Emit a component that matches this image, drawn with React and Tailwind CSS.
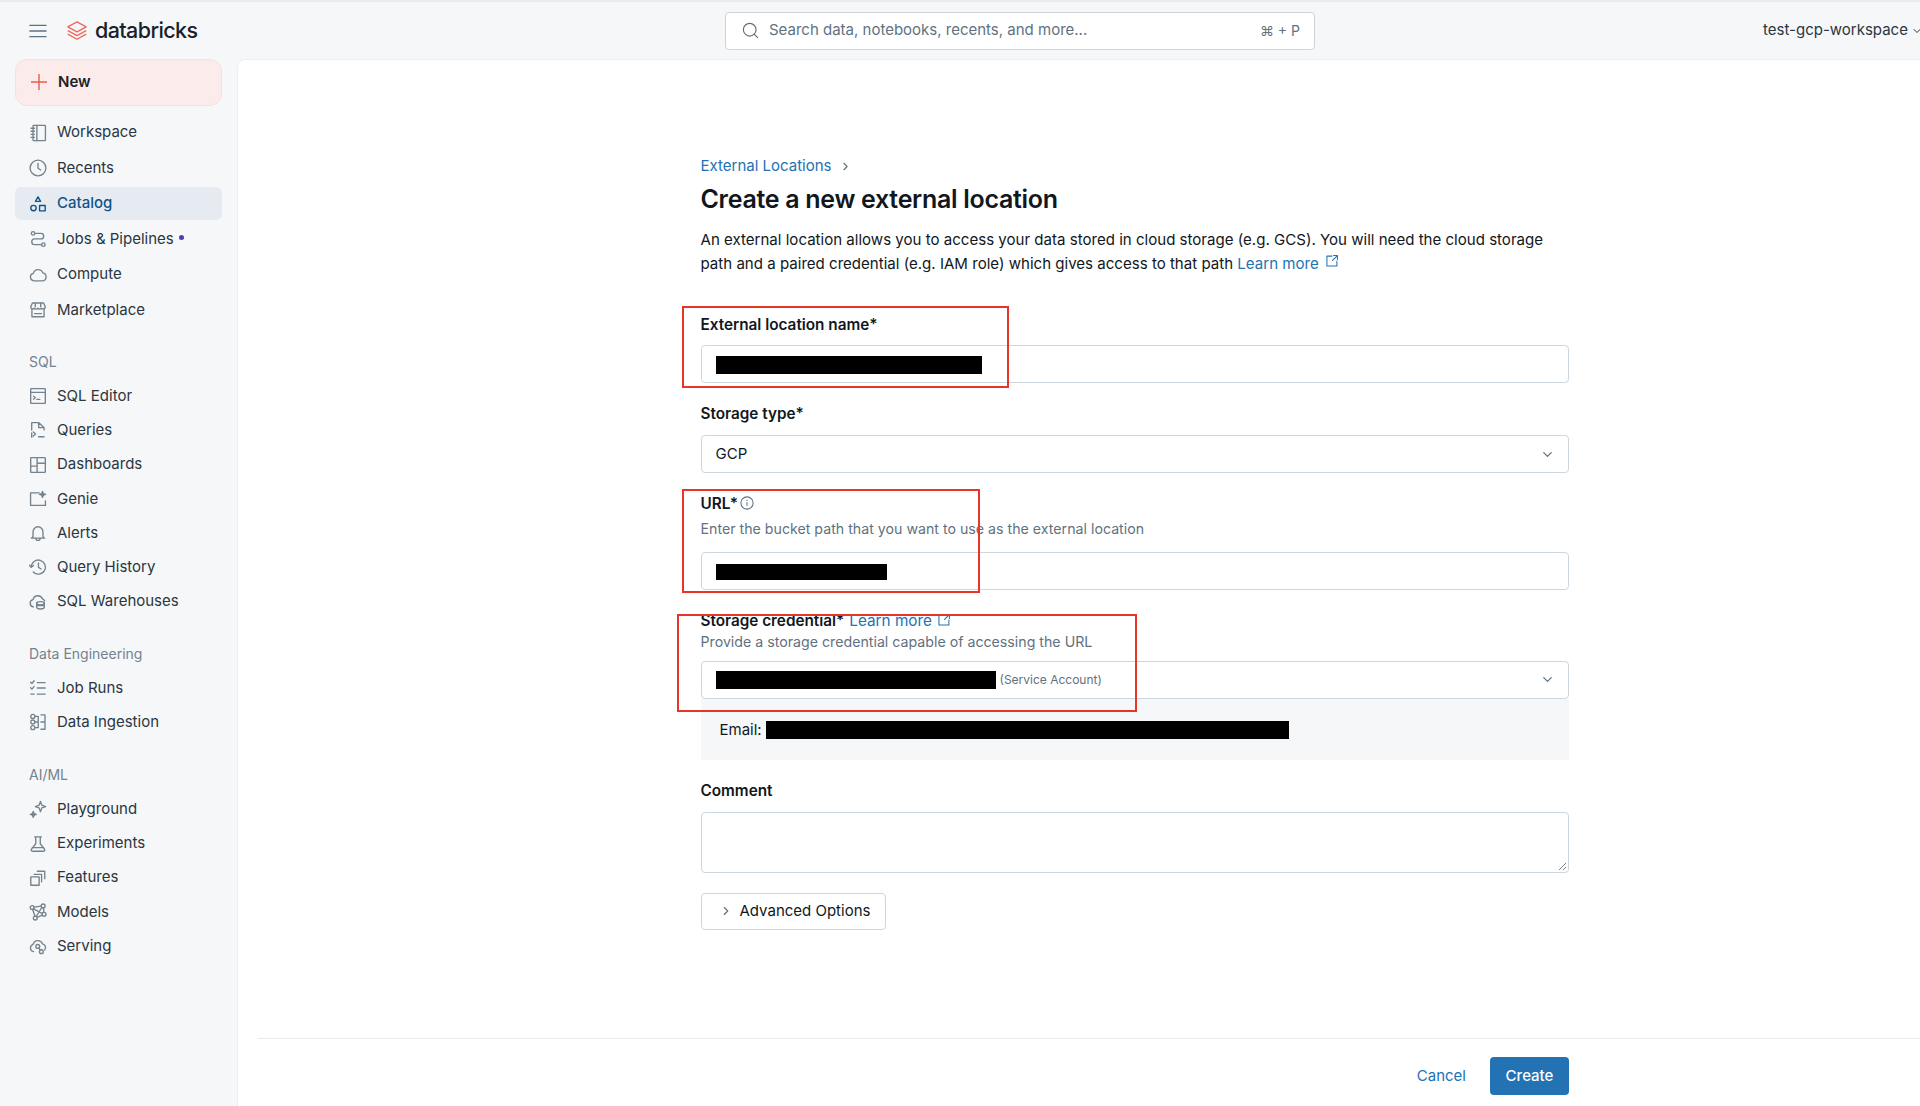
import React from 'react';
import { ChevronDown, ChevronRight, Search } from 'lucide-react';

// icon helper, everything is drawn on a 16 grid
const Ico = ({ children, className = 'w-[18px] h-[18px]' }) => (
  <svg viewBox="0 0 16 16" fill="none" stroke="currentColor" strokeWidth="1.2" strokeLinecap="round" strokeLinejoin="round" className={className} aria-hidden="true">
    {children}
  </svg>
);

const icons = {
  workspace: <><rect x="3.6" y="1.2" width="11" height="13.6" rx="0.6" /><path d="M7 1.2v13.6M1.8 3.8h3M1.8 6.4h3M1.8 9.2h3M1.8 11.9h3" /></>,
  recents: <><circle cx="8" cy="8" r="7" /><path d="M8 4v4.2l2.4 1.6" /></>,
  catalog: <><path d="M8 1.6l2.3 4H5.7z" /><circle cx="4" cy="11.6" r="2.4" /><rect x="9.4" y="9.3" width="5" height="4.8" /></>,
  jobs: <><circle cx="3.6" cy="3" r="1.5" /><circle cx="12.8" cy="13" r="1.5" /><path d="M5.2 3h5.4a2.4 2.4 0 0 1 0 4.9H5a2.5 2.5 0 0 0 0 5.1h6.2" /></>,
  compute: <path d="M4.4 13.2a3.4 3.4 0 0 1-.5-6.7 4.4 4.4 0 0 1 8.4-.4 3.6 3.6 0 0 1-.2 7.1z" />,
  marketplace: <><path d="M3 1.8h10l1.5 3.6a1.9 1.9 0 0 1-3.3 1 1.9 1.9 0 0 1-3.2 0 1.9 1.9 0 0 1-3.2 0 1.9 1.9 0 0 1-3.3-1z" /><path d="M2.6 7v7h10.8V7M5.6 2v3M10.4 2v3M5 11.2h6" /></>,
  sqlEditor: <><rect x="1.5" y="1.5" width="13" height="13" rx="0.5" /><path d="M1.5 4.8h13M4 8.2l1.6 1.3L4 10.8M7 11h2.6" /></>,
  queries: <><path d="M2.4 8V1.5h6.4l4.6 4.4v2M8.6 1.5v4.4h4.8M2.4 10.6v3.8" /><path d="M3.8 9.8l2 1.8-2 1.8M8.6 14h4.8" /></>,
  dashboards: <><rect x="1.5" y="1.5" width="13" height="13" rx="0.5" /><path d="M7.2 1.5v13M1.5 9h5.7M7.2 6.4h7.3" /></>,
  genie: <><path d="M9 2.6H1.4v11h13.2V9.6M14.8 13.6h-13" /><path d="M12 1.2l.7 2 2 .7-2 .7-.7 2-.7-2-2-.7 2-.7z" fill="currentColor" /></>,
  alerts: <><path d="M3.6 11.4V6.8a4.4 4.4 0 0 1 8.8 0v4.6l1.5 1.2H2.1z" /><path d="M6.2 12.8a1.8 1.8 0 0 0 3.6 0" /></>,
  history: <><path d="M2 8a6.3 6.3 0 1 1 1.8 4.5" /><path d="M.4 6.4L2 8.2l2-1.6M8.4 4.4v4l2.4 1.4" /></>,
  warehouses: <><path d="M4 13.2a3.3 3.3 0 0 1-.4-6.5 4.4 4.4 0 0 1 8.4-.5 3.4 3.4 0 0 1 2 1.8" /><ellipse cx="10.2" cy="10" rx="3.4" ry="1.5" /><path d="M6.8 10v3.6c0 .9 1.5 1.5 3.4 1.5s3.4-.6 3.4-1.5V10M6.8 12h6.8" /></>,
  jobRuns: <><path d="M1.4 2.8l1.2 1.2 2-2.4M1.4 7.8l1.2 1.2 2-2.4M1.6 13.4h3M7.4 3.2h7M7.4 8h7M7.4 13.4h7" /></>,
  ingestion: <><circle cx="3.4" cy="3" r="1.8" /><circle cx="3.4" cy="8" r="1.8" /><circle cx="3.4" cy="13" r="1.8" /><path d="M5.2 3h3v10h-3M5.2 8H8M10.6 1.6h3.6v12.8h-3.6M10.6 8h3.6" /></>,
  playground: <><path d="M10.2 1.2l1.2 3.4 3.4 1.2-3.4 1.2-1.2 3.4L9 7 5.6 5.8 9 4.6z" /><path d="M3.8 10.2l.7 1.9 1.9.7-1.9.7-.7 1.9-.7-1.9-1.9-.7 1.9-.7z" fill="currentColor" /></>,
  experiments: <><path d="M5 1.6h6M6 1.6v6.2l-3.8 4.8c-.6.8-.2 1.8.8 1.8h10c1 0 1.4-1 .8-1.8L10 7.800V1.600" /><path d="M3 11.200h10" /></>,
  features: <><rect x="1.6" y="7" width="7.4" height="7.4" /><path d="M4.6 4.8h6.6v6.6M7.4 2h6.6v6.6" /></>,
  models: <><circle cx="2.8" cy="4" r="1.7" /><circle cx="12.6" cy="2.6" r="1.7" /><circle cx="13.4" cy="10" r="1.7" /><circle cx="5.6" cy="13.4" r="1.7" /><path d="M4.4 3.7l6.6-.9M12.9 4.3l.3 4M11.8 10.7l-4.7 2M5.3 11.7L3.2 5.7M3.9 5.3l7.900 3.900M11.400 4l-5 8" /></>,
  serving: <><path d="M4 13a3.3 3.3 0 0 1-.4-6.4 4.4 4.4 0 0 1 8.4-.5 3.4 3.4 0 0 1 2 5.4" /><circle cx="7.8" cy="8.4" r="1.7" /><circle cx="11" cy="13" r="1.7" /><path d="M8.8 9.8l1.2 1.8" /></>,
};

const Row = ({ icon, label, active, dot, h = 'h-[33px]' }) => (
  <div className={`flex items-center gap-[10px] rounded-md pl-[14px] ${h} ${active ? 'bg-[#e6ebf2] font-medium text-[#0e538b]' : 'text-[#2a3640]'}`}>
    <span className={`flex w-[18px] justify-center ${active ? 'text-[#0e538b]' : 'text-[#74838e]'}`}>
      <Ico>{icons[icon]}</Ico>
    </span>
    <span>{label}</span>
    {dot && <span className="-ml-[5px] -mt-[4px] h-[5px] w-[5px] rounded-full bg-[#4a3fb5]" />}
  </div>
);

const Section = ({ title, items }) => (
  <div className="mt-[25.7px]">
    <div className="mb-[7px] h-[20px] pl-[14px] text-[14px] leading-[20px] text-[#73838f]">{title}</div>
    {items.map(([icon, label]) => (
      <Row key={label} icon={icon} label={label} h="h-[34.2px]" />
    ))}
  </div>
);

const Label = ({ children, className = '' }) => (
  <div className={`h-[22px] text-[15.3px] font-semibold leading-[22px] text-[#11171c] ${className}`}>{children}</div>
);

const Hint = ({ children, className = '' }) => (
  <div className={`text-[14.2px] leading-[21px] text-[#5f7281] ${className}`}>{children}</div>
);

const Field = ({ children, className = '' }) => (
  <div className={`flex h-[38px] items-center rounded-[4px] border border-[#cdd6dd] bg-white pl-[14px] pr-[13px] ${className}`}>{children}</div>
);

const Redact = ({ className }) => <span className={`block bg-black ${className}`} />;

const ExternalIcon = () => (
  <Ico className="h-[14px] w-[14px] text-[#2272b4]">
    <path d="M8 2.4H2.2v11.4h11.4V8" />
    <path d="M9.8 1.8h4.4v4.4M14.2 1.8L8.6 7.4" />
  </Ico>
);

export default function App() {
  return (
    <div className="relative flex h-[1106px] w-[1920px] flex-col overflow-hidden border-t-2 border-[#e9ecef] bg-[#f6f7f9] font-['Inter',sans-serif] text-[15px]">
      {/* top bar */}
      <header className="flex h-[57px] shrink-0 items-center">
        <div className="flex w-[237px] shrink-0 items-center pl-[29px]">
          <Ico className="h-[18px] w-[18px] text-[#5f7281]"><path d="M.8 3h14.4M.8 8h14.4M.8 13h14.4" /></Ico>
          <svg viewBox="0 0 24 24" className="ml-[19px] h-[22px] w-[22px] text-[#ee6a5d]" fill="none" stroke="currentColor" strokeWidth="1.5" strokeLinejoin="round" aria-hidden="true">
            <path d="M12 2l10 5.5-10 5.5L2 7.5z" />
            <path d="M2 11.5l10 5.5 10-5.5M2 15.5l10 5.5 10-5.5" />
          </svg>
          <span className="ml-[7px] text-[21.5px] font-medium leading-none tracking-[-0.6px] text-[#1b2126]">databricks</span>
        </div>
        <div className="ml-[488px] flex h-[38px] w-[590px] shrink-0 items-center rounded-[4px] border border-[#cdd3da] bg-white pl-[15px] pr-[14px] text-[#5f7281]">
          <Search className="h-[19px] w-[19px] text-[#5f7281]" strokeWidth={1.5} />
          <span className="ml-[9px]">Search data, notebooks, recents, and more...</span>
          <span className="ml-auto text-[14px]">⌘ + P</span>
        </div>
        <div className="ml-[448px] flex shrink-0 items-center whitespace-nowrap text-[#2a3640]">
          <span>test-gcp-workspace</span>
          <ChevronDown className="ml-[3px] h-[12px] w-[12px] shrink-0" />
        </div>
      </header>

      <div className="flex min-h-0 flex-1">
        {/* sidebar */}
        <aside className="w-[237px] shrink-0 px-[15px]">
          <div className="-mt-[0.5px] flex h-[47px] items-center gap-[10px] rounded-xl border border-[#f7e0dd] bg-[#fbeceb] pl-[14px] font-semibold text-[#1b2126]">
            <svg viewBox="0 0 18 18" className="h-[18px] w-[18px] text-[#ec5b4f]" fill="none" stroke="currentColor" strokeWidth="1.4" aria-hidden="true"><path d="M9 1v16M1 9h16" /></svg>
            New
          </div>
          <div className="mt-[10.5px] flex flex-col gap-[2.5px]">
            <Row icon="workspace" label="Workspace" />
            <Row icon="recents" label="Recents" />
            <Row icon="catalog" label="Catalog" active />
            <Row icon="jobs" label="Jobs & Pipelines" dot />
            <Row icon="compute" label="Compute" />
            <Row icon="marketplace" label="Marketplace" />
          </div>
          <Section
            title="SQL"
            items={[['sqlEditor', 'SQL Editor'], ['queries', 'Queries'], ['dashboards', 'Dashboards'], ['genie', 'Genie'], ['alerts', 'Alerts'], ['history', 'Query History'], ['warehouses', 'SQL Warehouses']]}
          />
          <Section title="Data Engineering" items={[['jobRuns', 'Job Runs'], ['ingestion', 'Data Ingestion']]} />
          <Section
            title="AI/ML"
            items={[['playground', 'Playground'], ['experiments', 'Experiments'], ['features', 'Features'], ['models', 'Models'], ['serving', 'Serving']]}
          />
        </aside>

        {/* main card */}
        <main className="flex min-w-0 flex-1 flex-col rounded-tl-lg border-l border-t border-[#edf0f2] bg-white">
          <div className="flex-1 pl-[462.5px] pt-[95px]">
            <div className="w-[868.5px]">
              <div className="flex h-[22px] items-center leading-[22px] text-[#2272b4]">
                External Locations
                <ChevronRight className="ml-[8px] h-[13px] w-[13px] text-[#5f7281]" />
              </div>
              <h1 className="mt-[4px] text-[25px] font-semibold leading-[36px] tracking-[-0.3px] text-[#11171c]">Create a new external location</h1>
              <p className="mt-[11px] text-[15.07px] leading-[23.5px] text-[#11171c]">
                An external location allows you to access your data stored in cloud storage (e.g. GCS). You will need the cloud storage path and a paired credential (e.g. IAM role) which gives access to that path{' '}
                <span className="text-[#2272b4]">Learn more</span>
                <span className="ml-[6px] inline-block align-[1px]"><ExternalIcon /></span>
              </p>

              <Label className="mt-[38.5px]">External location name*</Label>
              <Field className="mt-[9.5px]"><Redact className="mt-[2px] h-[18px] w-[266px]" /></Field>

              <Label className="mt-[20px]">Storage type*</Label>
              <Field className="mt-[10px] justify-between text-[#11171c]">
                GCP
                <ChevronDown className="h-[15px] w-[15px] text-[#5f7281]" />
              </Field>

              <Label className="mt-[20px] flex items-center">
                URL*
                <svg viewBox="0 0 16 16" className="ml-[2px] -mt-[2px] h-[14px] w-[14px] text-[#5f7281]" fill="none" stroke="currentColor" strokeWidth="1.2" aria-hidden="true">
                  <circle cx="8" cy="8" r="7" />
                  <path d="M8 7.2v4M8 4.4v1.2" />
                </svg>
              </Label>
              <Hint className="mt-[3px]">Enter the bucket path that you want to use as the external location</Hint>
              <Field className="mt-[13px]"><Redact className="mt-[2px] h-[16px] w-[171px]" /></Field>

              <Label className="mt-[20px] flex items-center">
                Storage credential*
                <span className="ml-[5px] font-normal text-[#2272b4]">Learn more</span>
                <span className="ml-[5px] -mt-[3px]"><ExternalIcon /></span>
              </Label>
              <Hint className="-mt-[1px]">Provide a storage credential capable of accessing the URL</Hint>
              <Field className="mt-[8.5px]">
                <Redact className="mt-[1px] h-[18px] w-[280px]" />
                <span className="ml-[4px] text-[12px] text-[#5f7281]">(Service Account)</span>
                <ChevronDown className="ml-auto h-[15px] w-[15px] text-[#5f7281]" />
              </Field>
              <div className="flex h-[61px] items-center bg-[#f6f7f9] pl-[19px] pt-[2px] text-[#11171c]">
                Email:
                <Redact className="ml-[4px] h-[18px] w-[523px]" />
              </div>

              <Label className="mt-[20px]">Comment</Label>
              <div className="relative mt-[10px] h-[61px] rounded-[4px] border border-[#cdd6dd]">
                <svg viewBox="0 0 10 10" className="absolute bottom-[1px] right-[1px] h-[9px] w-[9px] text-[#6b7680]" fill="none" stroke="currentColor" strokeWidth="1" aria-hidden="true">
                  <path d="M9 1L1 9M9 5.5L5.5 9" />
                </svg>
              </div>

              <div className="mt-[20px] flex h-[37px] w-[185px] items-center rounded-[4px] border border-[#cdd6dd] pl-[17px] text-[#11171c]">
                <ChevronRight className="h-[14px] w-[14px] text-[#5f7281]" />
                <span className="ml-[7px]">Advanced Options</span>
              </div>
            </div>
          </div>

          {/* footer */}
          <div className="ml-[20px] flex h-[68px] shrink-0 items-center justify-end border-t border-[#e8ebee] pt-[6px] pr-[351px]">
            <span className="pt-[2px] text-[#2272b4]">Cancel</span>
            <button type="button" className="ml-[24px] h-[38px] w-[79px] rounded-[4px] bg-[#2272b4] pt-[2px] font-medium text-white">Create</button>
          </div>
        </main>
      </div>

      {/* red annotation boxes drawn on top of the screenshot */}
      <div className="pointer-events-none absolute left-[682px] top-[304px] h-[82px] w-[327px] border-2 border-[#e8352a]" />
      <div className="pointer-events-none absolute left-[682px] top-[487px] h-[104px] w-[298px] border-2 border-[#e8352a]" />
      <div className="pointer-events-none absolute left-[677px] top-[612px] h-[98px] w-[460px] border-2 border-[#e8352a]" />
    </div>
  );
}
